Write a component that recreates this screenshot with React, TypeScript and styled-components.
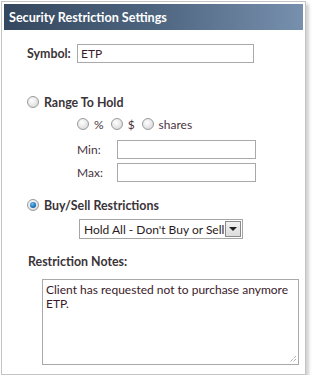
import React from 'react';
import styled, { createGlobalStyle } from 'styled-components';

const GlobalStyle = createGlobalStyle`
  body {
    margin: 0;
    background: #fff;
    font-family: Lato, "Open Sans", Arial, sans-serif;
  }
`;

const Panel = styled.div`
  box-sizing: border-box;
  margin: 1px 0 0 1px;
  width: 305px;
  height: 374px;
  padding: 2px;
  border: 1px solid #c4c4c4;
  background: #fff;
  box-shadow: 3px 3px 3px rgba(0, 0, 0, 0.18);
`;

const Header = styled.div`
  height: 26px;
  display: flex;
  align-items: center;
  padding-left: 5px;
  background: linear-gradient(to right, #34475e 0%, #4e6580 50%, #7790ad 100%);
  color: #fff;
  font-size: 12.6px;
  font-weight: 700;
`;

const Body = styled.div`
  padding: 14px 0 0 23px;
  display: flex;
  flex-direction: column;
`;

const Row = styled.div<{ $indent?: number; $top?: number }>`
  display: flex;
  align-items: center;
  height: 18px;
  margin-left: ${({ $indent }) => $indent ?? 0}px;
  margin-top: ${({ $top }) => $top ?? 0}px;
`;

const BoldLabel = styled.span<{ $width?: number }>`
  font-size: 12.4px;
  font-weight: 700;
  color: #3a3438;
  white-space: nowrap;
  width: ${({ $width }) => ($width ? `${$width}px` : 'auto')};
`;

const SmallLabel = styled.span<{ $width?: number }>`
  font-size: 12px;
  color: #4a3340;
  white-space: nowrap;
  width: ${({ $width }) => ($width ? `${$width}px` : 'auto')};
`;

const TextBox = styled.div<{ $width: number }>`
  box-sizing: border-box;
  width: ${({ $width }) => $width}px;
  height: 19px;
  border: 1px solid #a9a9a9;
  font-size: 12px;
  color: #3a1a2a;
  padding-left: 3px;
  display: flex;
  align-items: center;
`;

const RadioDot = styled.span<{ $checked?: boolean }>`
  box-sizing: border-box;
  width: 12px;
  height: 12px;
  border-radius: 50%;
  border: 1px solid #9a9a9a;
  background: radial-gradient(circle at 40% 35%, #ffffff 0%, #e6e6e6 55%, #cfcfcf 100%);
  display: flex;
  align-items: center;
  justify-content: center;
  margin-right: 5px;
  flex-shrink: 0;
  &::after {
    content: '';
    display: ${({ $checked }) => ($checked ? 'block' : 'none')};
    width: 6px;
    height: 6px;
    border-radius: 50%;
    background: radial-gradient(circle at 40% 35%, #6fc0f0 0%, #1a6fb8 60%, #0d3f78 100%);
  }
`;

const RadioItem = styled.span`
  display: inline-flex;
  align-items: center;
  margin-right: 7px;
`;

const Select = styled.div`
  box-sizing: border-box;
  width: 164px;
  height: 20px;
  border: 1px solid #a5a5a5;
  display: flex;
  align-items: center;
  justify-content: space-between;
  padding: 1px 1px 1px 4px;
  font-size: 12px;
  color: #2a1a24;
  white-space: nowrap;
`;

const SelectButton = styled.span`
  box-sizing: border-box;
  width: 16px;
  height: 16px;
  border: 1px solid #8a8a8a;
  background: linear-gradient(#f2f2f2, #dcdcdc);
  display: flex;
  align-items: center;
  justify-content: center;
  &::after {
    content: '';
    border-left: 4px solid transparent;
    border-right: 4px solid transparent;
    border-top: 4px solid #222;
  }
`;

const Notes = styled.div`
  position: relative;
  box-sizing: border-box;
  width: 257px;
  height: 86px;
  margin: 9px 0 0 15px;
  border: 1px solid #a9a9a9;
  padding: 3px 0 0 3px;
  font-size: 12px;
  line-height: 14px;
  color: #3a1a2a;
`;

const Grip = styled.svg`
  position: absolute;
  right: 1px;
  bottom: 1px;
`;

const App = () => {
  return (
    <>
      <GlobalStyle />
      <Panel>
        <Header>Security Restriction Settings</Header>
        <Body>
          <Row>
            <BoldLabel $width={50}>Symbol:</BoldLabel>
            <TextBox $width={177}>ETP</TextBox>
          </Row>
          <Row $top={31}>
            <RadioDot />
            <BoldLabel>Range To Hold</BoldLabel>
          </Row>
          <Row $indent={50} $top={4}>
            <RadioItem><RadioDot /><SmallLabel>%</SmallLabel></RadioItem>
            <RadioItem><RadioDot /><SmallLabel>$</SmallLabel></RadioItem>
            <RadioItem><RadioDot /><SmallLabel>shares</SmallLabel></RadioItem>
          </Row>
          <Row $indent={50} $top={7}>
            <SmallLabel $width={40}>Min:</SmallLabel>
            <TextBox $width={139} />
          </Row>
          <Row $indent={50} $top={5}>
            <SmallLabel $width={40}>Max:</SmallLabel>
            <TextBox $width={139} />
          </Row>
          <Row $top={15}>
            <RadioDot $checked />
            <BoldLabel>Buy/Sell Restrictions</BoldLabel>
          </Row>
          <Row $indent={52} $top={6}>
            <Select>
              Hold All - Don't Buy or Sell
              <SelectButton />
            </Select>
          </Row>
          <Row $indent={1} $top={14}>
            <BoldLabel>Restriction Notes:</BoldLabel>
          </Row>
          <Notes>
            Client has requested not to purchase anymore ETP.
            <Grip width="10" height="10" viewBox="0 0 10 10">
              <path d="M9 3 L3 9 M9 6 L6 9" stroke="#8a8a8a" strokeWidth="1" strokeDasharray="1 1" />
            </Grip>
          </Notes>
        </Body>
      </Panel>
    </>
  );
};

export default App;
